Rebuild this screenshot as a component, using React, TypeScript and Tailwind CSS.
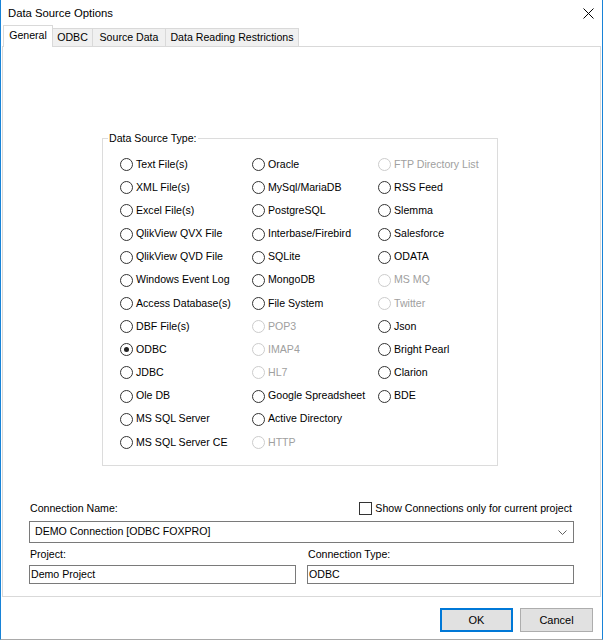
import React from "react";

type Item = { label: string; disabled?: boolean; checked?: boolean };

const col1: Item[] = [
  { label: "Text File(s)" },
  { label: "XML File(s)" },
  { label: "Excel File(s)" },
  { label: "QlikView QVX File" },
  { label: "QlikView QVD File" },
  { label: "Windows Event Log" },
  { label: "Access Database(s)" },
  { label: "DBF File(s)" },
  { label: "ODBC", checked: true },
  { label: "JDBC" },
  { label: "Ole DB" },
  { label: "MS SQL Server" },
  { label: "MS SQL Server CE" },
];

const col2: Item[] = [
  { label: "Oracle" },
  { label: "MySql/MariaDB" },
  { label: "PostgreSQL" },
  { label: "Interbase/Firebird" },
  { label: "SQLite" },
  { label: "MongoDB" },
  { label: "File System" },
  { label: "POP3", disabled: true },
  { label: "IMAP4", disabled: true },
  { label: "HL7", disabled: true },
  { label: "Google Spreadsheet" },
  { label: "Active Directory" },
  { label: "HTTP", disabled: true },
];

const col3: Item[] = [
  { label: "FTP Directory List", disabled: true },
  { label: "RSS Feed" },
  { label: "Slemma" },
  { label: "Salesforce" },
  { label: "ODATA" },
  { label: "MS MQ", disabled: true },
  { label: "Twitter", disabled: true },
  { label: "Json" },
  { label: "Bright Pearl" },
  { label: "Clarion" },
  { label: "BDE" },
];

function Radio({ item }: { item: Item }) {
  return (
    <div className="flex items-center h-[23.17px]">
      <span
        className={
          item.disabled
            ? "w-[13px] h-[13px] rounded-full border border-[#cccccc] bg-white flex items-center justify-center shrink-0"
            : "w-[13px] h-[13px] rounded-full border border-[#333333] bg-white flex items-center justify-center shrink-0"
        }
      >
        {item.checked && <span className="w-[5px] h-[5px] rounded-full bg-[#222222]" />}
      </span>
      <span className={item.disabled ? "ml-[3px] text-[#a0a0a0] whitespace-nowrap" : "ml-[3px] text-black whitespace-nowrap"}>
        {item.label}
      </span>
    </div>
  );
}

function Column({ items, className }: { items: Item[]; className: string }) {
  return (
    <div className={className}>
      {items.map((it) => (
        <Radio key={it.label} item={it} />
      ))}
    </div>
  );
}

export default function App() {
  return (
    <div
      className="w-[603px] h-[640px] bg-white border-l border-r border-b border-l-[#1883d7] border-r-[#1883d7] border-b-[#a9a9a9] flex flex-col text-[10.6px] text-black"
      style={{ fontFamily: '"Liberation Sans", Arial, sans-serif' }}
    >
      {/* Title bar */}
      <div className="h-[25px] shrink-0 flex items-center justify-between pl-[7px] pr-[8px]">
        <span className="text-[11.3px] leading-[14px] text-black">Data Source Options</span>
        <svg width="11" height="11" viewBox="0 0 11 11" className="mt-[1px]">
          <path d="M0.5 0.5 L10.5 10.5 M10.5 0.5 L0.5 10.5" stroke="#000" strokeWidth="1" fill="none" />
        </svg>
      </div>

      {/* Tabs */}
      <div className="h-[21px] shrink-0 flex items-end pl-[2px]">
        <div className="relative z-10 -mb-px h-[22px] w-[50px] bg-white border border-b-0 border-[#d9d9d9] flex items-center justify-center pb-[2px]">
          General
        </div>
        <div className="h-[18px] w-[40px] bg-[#f0f0f0] border border-l-0 border-b-0 border-[#d9d9d9] flex items-center justify-center">
          ODBC
        </div>
        <div className="h-[18px] w-[73px] bg-[#f0f0f0] border border-l-0 border-b-0 border-[#d9d9d9] flex items-center justify-center">
          Source Data
        </div>
        <div className="h-[18px] w-[133px] bg-[#f0f0f0] border border-l-0 border-b-0 border-[#d9d9d9] flex items-center justify-center">
          Data Reading Restrictions
        </div>
      </div>

      {/* Panel */}
      <div className="mx-px h-[551px] shrink-0 border border-[#d9d9d9] bg-white flex flex-col">
        {/* Group box */}
        <div className="relative ml-[99px] mt-[91px] w-[396px] h-[328px] border border-[#dcdcdc] pt-[14px] pl-[17px] flex">
          <span className="absolute left-[5px] -top-[7px] px-px leading-[13px] bg-white">Data Source Type:</span>
          <Column items={col1} className="w-[132px] flex flex-col" />
          <Column items={col2} className="w-[126px] flex flex-col" />
          <Column items={col3} className="flex-1 flex flex-col" />
        </div>

        {/* Connection area */}
        <div className="ml-[26px] w-[545px] mt-[35px] flex flex-col">
          <div className="h-[16px] flex items-center justify-between pl-px pr-[2px]">
            <span>Connection Name:</span>
            <div className="flex items-center">
              <span className="w-[13px] h-[13px] border border-[#333333] bg-white" />
              <span className="ml-[3px]">Show Connections only for current project</span>
            </div>
          </div>
          <div className="mt-[4px] h-[22px] border border-[#7a7a7a] bg-white flex items-center justify-between pl-[5px] pr-[6px]">
            <span>DEMO Connection [ODBC FOXPRO]</span>
            <svg width="9" height="5" viewBox="0 0 9 5">
              <path d="M0.5 0.5 L4.5 4.5 L8.5 0.5" stroke="#606060" strokeWidth="1" fill="none" />
            </svg>
          </div>
          <div className="mt-[5px] grid grid-cols-2 gap-x-[11px]">
            <span className="h-[14px] flex items-center pl-px">Project:</span>
            <span className="h-[14px] flex items-center pl-px">Connection Type:</span>
            <div className="mt-[3px] h-[19px] border border-[#7a7a7a] bg-white flex items-center pl-px">Demo Project</div>
            <div className="mt-[3px] h-[19px] border border-[#7a7a7a] bg-white flex items-center pl-px">ODBC</div>
          </div>
        </div>
      </div>

      {/* Buttons */}
      <div className="mt-[11px] flex justify-end gap-[7px] pr-[9px]">
        <button className="w-[73px] h-[24px] bg-[#e1e1e1] border-2 border-[#0078d7] text-[11px] text-black">OK</button>
        <button className="w-[73px] h-[24px] bg-[#e1e1e1] border border-[#adadad] text-[11px] text-black">Cancel</button>
      </div>
    </div>
  );
}
